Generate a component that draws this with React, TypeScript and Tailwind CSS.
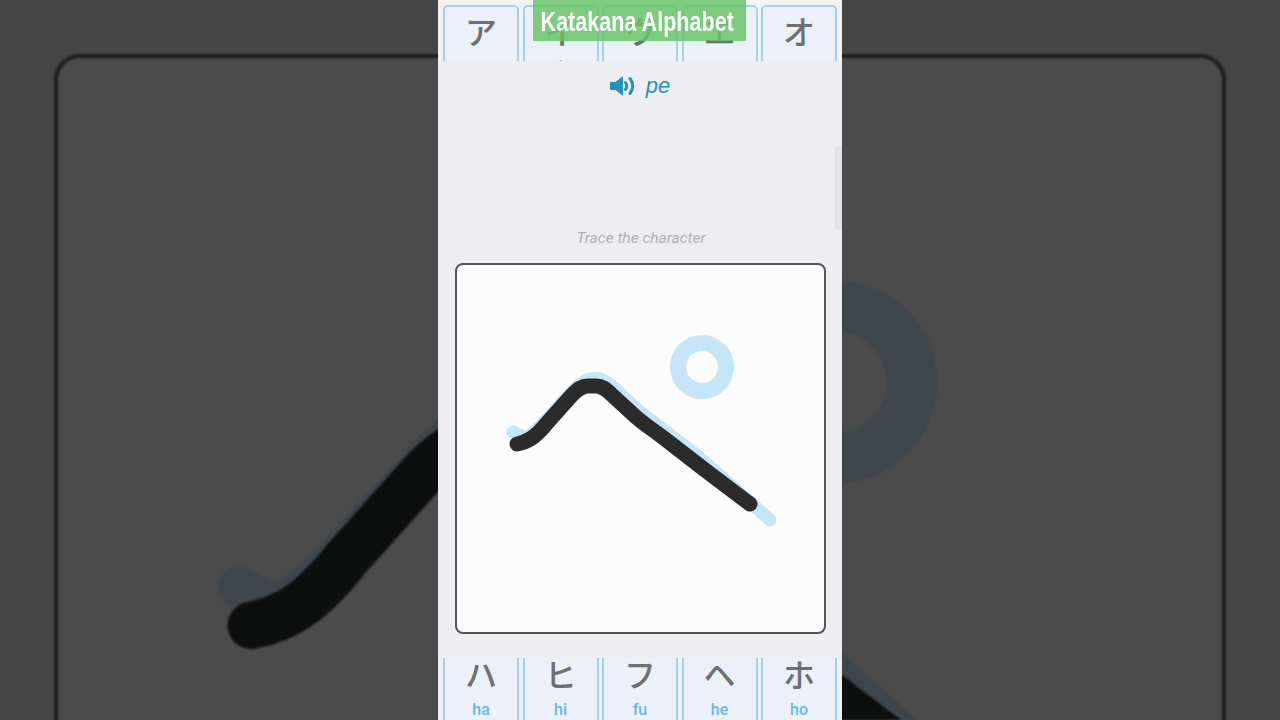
const BLUE = "M513 432 L526 438 C538 430 548 418 570 394 C578 384 590 376 600 379 C608 381 616 390 640 412 L700 458 L770 520";
const BLACK = "M517 444 C527 442 535 438 547 423 L572 395 C578 389 582 386 588 386 L596 386 C602 386 606 389 612 395 L636 417 C645 425 652 429 665 439 L705 470 L750 504";

const Drawing = () => (
  <>
    <circle cx="702" cy="367" r="24" fill="none" stroke="#c5e5f8" strokeWidth="16" />
    <path d={BLUE} fill="none" stroke="#c5e5f8" strokeWidth="13" strokeLinecap="round" strokeLinejoin="round" />
    <path d={BLACK} fill="none" stroke="#2b2b2c" strokeWidth="15" strokeLinecap="round" strokeLinejoin="round" />
  </>
);

const BgDrawing = () => (
  <svg className="absolute inset-0 blur-[1px]" width="1280" height="720" viewBox="0 0 1280 720">
    <g transform="translate(640 360) scale(3.16) translate(-640 -360)">
      <circle cx="702" cy="367" r="24" fill="none" stroke="#3d474c" strokeWidth="16" />
      <path d={BLUE} fill="none" stroke="#3d464d" strokeWidth="13" strokeLinecap="round" strokeLinejoin="round" />
      <path d={BLACK} fill="none" stroke="#0d0e0e" strokeWidth="15" strokeLinecap="round" strokeLinejoin="round" />
    </g>
  </svg>
);

const SpeakerIcon = () => (
  <svg width="26" height="22" viewBox="0 0 26 22" className="shrink-0">
    <path d="M0.5 7.5 H5.5 L12.5 2 V20 L5.5 14.5 H0.5 Z" fill="#2193ba" stroke="#2193ba" strokeWidth="1" strokeLinejoin="round" />
    <path d="M15.5 7.5 Q18 11 15.5 14.5" fill="none" stroke="#2193ba" strokeWidth="3" strokeLinecap="round" />
    <path d="M20 3.5 Q25.5 11 20 18.5" fill="none" stroke="#2193ba" strokeWidth="3" strokeLinecap="round" />
  </svg>
);

const Tile = ({ kana, romaji, clipTop }: { kana: string; romaji: string; clipTop?: boolean }) => (
  <div
    className={`w-[76px] h-[84px] shrink-0 flex flex-col items-center border-2 border-[#a3d0ec] rounded-t-[5px] bg-[#ebf0f9] ${clipTop ? "-mt-[10px]" : ""}`}
  >
    <span className="text-[32px] leading-[46px] font-medium text-[#6f6f72] font-['Noto_Sans_CJK_JP',sans-serif]">{kana}</span>
    <span className="mt-[4px] text-[16px] leading-[20px] font-medium text-[#66b9e0] font-['Roboto',sans-serif]">{romaji}</span>
  </div>
);

const top = [["ア", "a"], ["イ", "i"], ["ウ", "u"], ["エ", "e"], ["オ", "o"]];
const bottom = [["ハ", "ha"], ["ヒ", "hi"], ["フ", "fu"], ["ヘ", "he"], ["ホ", "ho"]];

export default function App() {
  return (
    <div className="relative w-[1280px] h-[720px] overflow-hidden bg-[#464647] flex justify-center">
      <div className="absolute left-[54px] top-[54px] w-[1172px] h-[1172px] rounded-[26px] border-4 border-[#1e1e1e] bg-[#4b4b4b] blur-[1px]" />
      <BgDrawing />

      <div className="relative w-[404px] h-full flex flex-col items-center bg-[#eeeef2] overflow-hidden">
        <div className="w-full h-[61px] pt-[5px] px-[5px] flex justify-between overflow-hidden bg-[#f3f3f6]">
          {top.map(([k, r]) => (
            <Tile key={k} kana={k} romaji={r} />
          ))}
        </div>

        <div className="mt-[12px] h-[26px] flex items-center gap-[10px] text-[#2193ba]">
          <SpeakerIcon />
          <span className="text-[22px] leading-[26px] italic font-['Liberation_Sans',sans-serif]">pe</span>
        </div>

        <p className="mt-[128px] h-[22px] pl-[2px] text-[15.5px] leading-[22px] italic text-[#b0b0b5] font-['Roboto',sans-serif]">
          Trace the character
        </p>

        <div className="mt-[14px] w-[371px] h-[371px] shrink-0 rounded-[8px] border-2 border-[#555555] bg-[#fcfcfd] overflow-hidden">
          <svg className="w-full h-full block" viewBox="457 265 367 367">
            <Drawing />
          </svg>
        </div>

        <div className="mt-[24px] w-full h-[62px] px-[5px] flex justify-between overflow-hidden bg-[#eef0f7]">
          {bottom.map(([k, r]) => (
            <Tile key={k} kana={k} romaji={r} clipTop />
          ))}
        </div>

        <div className="absolute right-0 top-[146px] w-[7px] h-[84px] rounded-l-[6px] border border-r-0 border-[#dcdce0] bg-[#e4e4e8]" />

        <div className="absolute left-[95px] top-0 w-[213px] h-[41px] bg-[#68c46a]/85 flex items-center justify-center">
          <span className="inline-block pr-[6px] pt-[3px] scale-x-[0.77] text-[28px] leading-[38px] font-bold text-white whitespace-nowrap font-['Liberation_Sans',sans-serif]">
            Katakana Alphabet
          </span>
        </div>
      </div>
    </div>
  );
}
